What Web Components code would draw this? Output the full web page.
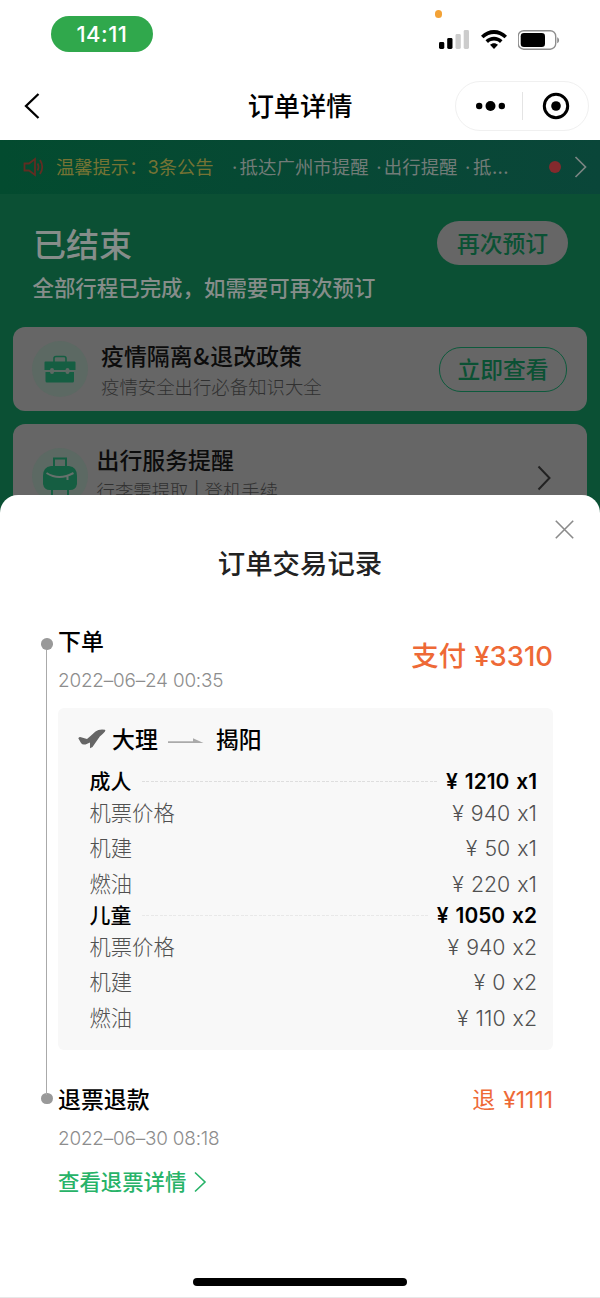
<!DOCTYPE html>
<html lang="zh-CN">
<head>
<meta charset="utf-8">
<title>订单详情</title>
<style>
html,body{margin:0;padding:0;background:#fff}
body{width:600px;height:1298px;overflow:hidden;font-family:Inter,"Noto Sans CJK SC",sans-serif;font-feature-settings:"calt" 0;color:#000}
</style>
</head>
<body>
<order-app></order-app>
<script>
const define = (name, css, html) => customElements.define(name, class extends HTMLElement {
  constructor() {
    super();
    const render = typeof html === 'function' ? html(this) : html;
    this.attachShadow({mode: 'open'}).innerHTML =
      `<style>:host{display:block;box-sizing:border-box}*{box-sizing:border-box}svg{display:block;flex:none}${css}</style>${render}`;
  }
});

/* Phone status bar */
define('status-bar', `
:host{height:72px;display:flex;justify-content:space-between;align-items:flex-start;padding:16px 40px 0 51px;position:relative}
.time{width:102px;height:36px;border-radius:18px;background:#30a84c;color:#fff;font-size:22px;font-weight:500;line-height:37px;text-align:center;letter-spacing:.5px}
.icons{display:flex;gap:11px;padding-top:14px}
.mic{position:absolute;left:434.5px;top:10px;width:7.5px;height:7.5px;border-radius:50%;background:#f3a236}
`, `
<div class="time">14:11</div><i class="mic"></i>
<div class="icons">
<svg width="31" height="20" viewBox="0 0 31 20"><g><rect x="0" y="12" width="5.3" height="7" rx="1.4"/><rect x="8.2" y="8" width="5.3" height="11" rx="1.4"/><rect x="16.5" y="4" width="5.3" height="15" rx="1.4" fill="#ccc"/><rect x="24.700" y="0" width="5.3" height="19" rx="1.4" fill="#ccc"/></g></svg>
<svg width="26" height="20" viewBox="0 0 26 20"><path d="M0 5.7C7.5-1.8 18.500-1.8 26 5.700L23.500 8.300C17.400 2.400 8.600 2.400 2.500 8.300Z"/><path d="M4.500 10.300C9.400 5.600 16.600 5.600 21.500 10.300L19 12.900C15.500 9.700 10.500 9.700 7 12.900Z"/><path d="M9 14.800C11.400 12.700 14.600 12.700 17 14.800L13 18.900Z"/></svg>
<svg width="42" height="20" viewBox="0 0 42 20"><rect x=".2" y=".7" width="37.500" height="18.500" rx="5.500" fill="none" stroke="#8e8e8e" stroke-width="1.400"/><rect x="2.700" y="3" width="24.300" height="14" rx="3.300"/><path d="M39.200 7.200c2.500 1 2.500 5 0 6z" fill="#8e8e8e"/></svg>
</div>`);

/* Navigation bar with title and mini-program capsule */
define('nav-bar', `
:host{height:68px;display:grid;grid-template:68px/1fr auto 1fr;align-items:center;padding:0 11px}
.back{margin-left:13px}
h1{margin:0;font-size:26.200px;font-weight:500;line-height:66px;height:68px;padding-top:2px}
.cap{justify-self:end;display:flex;align-items:center;width:134px;height:50px;border:1px solid #f0f0f0;border-radius:25px;padding:0 0 0 20px}
.sep{width:1px;height:28px;background:#e4e4e4;margin:0 18.500px 0 17px;flex:none}
`, `
<svg class="back" width="16" height="28" viewBox="0 0 16 28"><path d="M14.500 2L2 14L14.500 26" fill="none" stroke="#000" stroke-width="2.300"/></svg>
<h1><slot></slot></h1>
<div class="cap"><svg width="29" height="12" viewBox="0 0 29 12"><circle cx="3.200" cy="6" r="3.200"/><circle cx="14.500" cy="6" r="5"/><circle cx="25.800" cy="6" r="3.200"/></svg><i class="sep"></i><svg width="28" height="28" viewBox="0 0 28 28"><circle cx="14" cy="14" r="11.700" fill="none" stroke="#000" stroke-width="3"/><circle cx="14" cy="14" r="4.800"/></svg></div>`);

define('notice-bar', `
:host{height:54px;display:flex;align-items:center;padding:0 13px 0 23px;background:linear-gradient(90deg,#034b2f,#0a4639);font-size:18.300px;line-height:54px;white-space:nowrap;color:#727c78}
.tip{color:#767334;margin-left:12px;width:176px}
.n{margin-right:7.500px;font-size:18.450px}
.red{width:12px;height:12px;border-radius:50%;background:#842a2d;margin:0 13px 0 auto}
b{font-weight:400;margin-right:2.300px}
`, `
<svg width="21" height="20" viewBox="0 0 21 20" fill="none" stroke="#612d22" stroke-width="1.800"><path d="M1.500 6.500H6L12 2V18L6 13.500H1.500Z"/><path d="M14.500 6.500Q16.500 10 14.500 13.500M17 3Q21.500 10 17 17"/></svg>
<span class="tip">温馨提示：3条公告</span><span class="n"><b>·</b>抵达广州市提醒</span><span class="n"><b>·</b>出行提醒</span><span class="n" style="letter-spacing:.4px"><b>·</b>抵...</span>
<i class="red"></i><svg width="13" height="22" viewBox="0 0 13 22"><path d="M1.500 1L11.500 11L1.500 21" fill="none" stroke="#7b8583" stroke-width="1.700"/></svg>`);

define('pill-button', `
:host{width:131px;height:44px;border-radius:22px;background:#666;color:#0b5134;font-size:22.800px;font-weight:500;line-height:45px;text-align:center;flex:none}
:host([outline]){width:128px;height:45px;background:none;border:1px solid #0d5a3c;line-height:44px}
`, `<slot></slot>`);

define('trip-status', `
:host{display:flex;justify-content:space-between;height:133.400px;padding:27px 32px 0 33px;color:#868d8a}
h2{margin:0;font-size:33px;font-weight:500;line-height:48px}
p{margin:4px 0 0 -.500px;font-size:21.450px;line-height:30px;font-weight:500;white-space:nowrap;width:344px}
.l{width:380px}
`, `<div class="l"><h2>已结束</h2><p>全部行程已完成，如需要可再次预订</p></div><pill-button>再次预订</pill-button>`);

/* Card with round icon, two text lines and an action */
define('info-card', `
:host{display:flex;align-items:center;height:84px;margin:0 13px 13px;border-radius:12px;background:#666;padding:0 20px 0 19px}
.ic{width:56px;height:56px;border-radius:50%;background:#5c6963;display:grid;place-items:center;flex:none}
:host([tall]) .ic{margin-bottom:4px}
.tx{flex:1;margin-left:13px;white-space:nowrap;padding-top:1px}
:host([tall]) .tx{margin-left:8.500px;padding:0 0 6px}
:host([tall]){height:108px;margin-bottom:0;padding-right:36px}
h3{margin:0;font-size:22.900px;font-weight:500;line-height:32px;color:#0c0c0c}
p{margin:0;font-size:18.400px;line-height:28px;color:#303030;font-weight:300}
.amp{font-family:"Noto Sans CJK SC",sans-serif;margin:0 1px}
`, `<div class="ic"><slot name="icon"></slot></div><div class="tx"><h3><slot name="title"></slot></h3><p><slot></slot></p></div><slot name="action"></slot>`);

/* Timeline event: dot, rail, heading, amount, date and details */
define('time-line-item', `
:host{display:grid;grid-template-columns:12px 495px;column-gap:5px;padding-left:41px}
.rail{display:flex;flex-direction:column;align-items:center}
.dot{width:11.500px;height:11.500px;border-radius:50%;background:#999;margin-top:17px;flex:none}
:host([last]) .dot{margin-top:15px}
.line{width:1px;flex:1;background:#aaa;margin-bottom:-45px;position:relative;left:-.5px}
:host([last]) .line{display:none}
.head{display:flex;justify-content:space-between;align-items:flex-start}
h3{margin:0;font-size:22.900px;line-height:42px;font-weight:500}
:host([last]) h3{line-height:44px}
time{display:block;font-size:18.900px;line-height:28px;font-weight:300;color:#8d8d8d;margin-top:4px;letter-spacing:-.18px}
.amt{font-size:27.400px;font-weight:500;color:#ee6936;line-height:40px;margin-top:15px;white-space:nowrap;word-spacing:1px}
.left{width:200px}
:host([last]) .amt{font-size:22.900px;font-weight:400;line-height:44px;margin-top:0;word-spacing:1.500px}
:host([last]) time{margin-top:3px}
`, `<div class="rail"><i class="dot"></i><i class="line"></i></div><div><div class="head"><div class="left"><h3><slot name="title"></slot></h3><time><slot name="time"></slot></time></div><div class="amt"><slot name="amount"></slot></div></div><slot></slot></div>`);

define('fare-row', `
:host{display:flex;align-items:center;height:35.500px;font-size:21.300px;font-weight:300;color:#505050;white-space:nowrap;line-height:34px;word-spacing:1.100px}
:host([head]){height:27.500px;line-height:29px;font-size:20.900px;font-weight:600;color:#000;word-spacing:1.700px}
.dash{flex:1;height:1px;margin:0 9px 0 11px}
:host([head]) .dash{background:repeating-linear-gradient(90deg,#dedede 0 3px,transparent 3px 4.500px)}
:host([faint]) .dash{opacity:.6}
:host([head]) .k{font-weight:500}
`, el => `<span class="k">${el.getAttribute('label')}</span><i class="dash"></i><span><slot></slot></span>`);

define('fare-card', `
:host{height:342px;margin-top:13px;border-radius:6px;background:#f8f8f8;padding:14px 16px 0 20px}
.route{display:flex;align-items:center;height:37px;font-size:22.900px;font-weight:500;line-height:37px}
.plane{margin:-4px 6px 0 0}.arr{margin:3px 12px 0 10px}
.rows{padding:8.500px 0 0 11.500px}
`, `<div class="route"><svg class="plane" width="28" height="20" viewBox="0 0 28 20"><path d="M.3 9.200Q1.500 7.600 3 8.300L9 10L12.500 7L17.500 2.500Q21-.3 27 .7Q27.800 1.500 26.800 2.800Q25 5 21.800 7.400L14.500 18L12 19.200L12 13.500L7.500 15.400Q4.500 16.200 3 14Z" fill="#666"/></svg><span>大理</span><svg class="arr" width="36" height="8" viewBox="0 0 36 8"><path d="M0 3.200H25V.3L35.500 5H0Z" fill="#aaa"/></svg><span>揭阳</span></div>
<div class="rows"><slot></slot></div>`);

define('record-sheet', `
:host{position:relative;height:803px;margin-top:-20px;background:#fff;border-radius:18px 18px 0 0;border-bottom:1px solid #e8e8e8;overflow:hidden}
.x{position:absolute;right:26px;top:25px}
h2{margin:49px 0 0;font-size:27.400px;line-height:41px;font-weight:500;text-align:center;color:#222}
.body{padding-top:36px;height:694px}
.link{display:flex;align-items:center;font-size:21.400px;line-height:32px;font-weight:500;color:#27b368;margin-top:13px}
.link svg{margin:0 0 0 8px}
.home{position:absolute;left:193px;bottom:11px;width:214px;height:8px;border-radius:4px;background:#000}
`, `
<svg class="x" width="19" height="19" viewBox="0 0 19 19"><path d="M.8.800L18.200 18.200M18.200.800L.8 18.200" stroke="#8b8b8b" stroke-width="1.600"/></svg>
<h2>订单交易记录</h2>
<div class="body">
<time-line-item><span slot="title">下单</span><span slot="time">2022–06–24 00:35</span><span slot="amount">支付 ¥3310</span>
<fare-card>
<fare-row head label="成人">¥ 1210 x1</fare-row>
<fare-row label="机票价格">¥ 940 x1</fare-row><fare-row label="机建">¥ 50 x1</fare-row><fare-row label="燃油">¥ 220 x1</fare-row>
<fare-row head faint label="儿童">¥ 1050 x2</fare-row>
<fare-row label="机票价格">¥ 940 x2</fare-row><fare-row label="机建">¥ 0 x2</fare-row><fare-row label="燃油">¥ 110 x2</fare-row>
</fare-card></time-line-item>
<time-line-item last style="margin-top:27.500px"><span slot="title">退票退款</span><span slot="time">2022–06–30 08:18</span><span slot="amount">退 ¥1111</span>
<div class="link">查看退票详情<svg width="13" height="22" viewBox="0 0 13 22"><path d="M1 1.500L11 11L1 20.500" fill="none" stroke="#27b368" stroke-width="1.600"/></svg></div></time-line-item>
</div>
<i class="home"></i>`);

define('order-app', `
:host{width:600px;height:1298px}
.page{height:375px;background:#0b5034;overflow:hidden}
.amp{font-family:"Noto Sans CJK SC",sans-serif;margin:0 .8px}
`, `
<status-bar></status-bar><nav-bar>订单详情</nav-bar>
<div class="page"><notice-bar></notice-bar><trip-status></trip-status>
<info-card><svg slot="icon" width="32" height="28" viewBox="0 0 32 28"><g fill="#155e42"><path d="M1.500 6.500H30.500Q31.500 6.500 31.500 7.500V15H25.500A2 2 0 0 0 21.500 15H10A2 2 0 0 0 6 15H.5V7.500Q.5 6.500 1.500 6.500Z"/><path d="M1.500 17H6A2 2 0 0 0 10 17H21.500A2 2 0 0 0 25.500 17H30V26Q30 27.500 28.500 27.500H3Q1.500 27.500 1.500 26Z"/></g><path d="M10 7V3.500Q10 1.500 12 1.500H20Q22 1.500 22 3.500V7" fill="none" stroke="#155e42" stroke-width="1.600"/></svg><span slot="title">疫情隔离<span class="amp">&amp;</span>退改政策</span>疫情安全出行必备知识大全<pill-button slot="action" outline>立即查看</pill-button></info-card>
<info-card tall><svg slot="icon" width="36" height="40" viewBox="0 0 36 40"><path d="M12 12V2.500H24V12" fill="none" stroke="#155e42" stroke-width="2"/><path d="M9 10H27Q35 11 35 20V28Q34 34 28 34H8Q2 34 1 28V20Q1 11 9 10Z" fill="#155e42"/><path d="M4.500 17Q17 25 31.500 17M25.500 20V24" fill="none" stroke="#66716c" stroke-width="2"/><path d="M10 34V39M26 34V39" stroke="#155e42" stroke-width="2"/></svg><span slot="title">出行服务提醒</span>行李需提取 | 登机手续<svg slot="action" width="14" height="26" viewBox="0 0 14 26"><path d="M1.500 1.500L12.500 13L1.500 24.500" fill="none" stroke="#222" stroke-width="2"/></svg></info-card>
</div>
<record-sheet></record-sheet>`);
</script>
</body>
</html>
